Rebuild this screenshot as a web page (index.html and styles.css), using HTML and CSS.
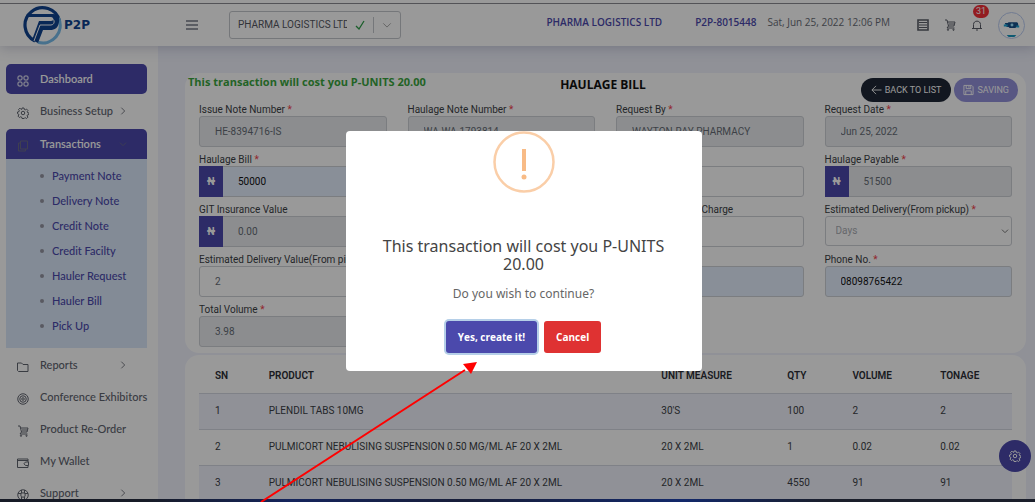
FILE: index.html
```html
<!DOCTYPE html>
<html lang="en">
<head>
<meta charset="utf-8">
<title>Haulage Bill - P2P</title>
<link rel="stylesheet" href="styles.css">
</head>
<body>
<svg class="sprite" aria-hidden="true">
  <symbol id="i-cart" viewBox="0 0 24 24"><path d="M2 2h4l3 12h11l2-8H7M9 14l-3 4h15M10 10h10" /><circle cx="8" cy="21.500" r="1.300"/><circle cx="19" cy="21.500" r="1.300"/></symbol>
  <symbol id="i-gear" viewBox="0 0 24 24"><path d="M10 2h4l.7 3 1.8.8 2.7-1.6 2.7 2.7-1.6 2.7.8 1.7 2.9.7v3l-3 .8-.7 1.8 1.6 2.7-2.7 2.7-2.7-1.6-1.8.8L14 23h-4l-.7-2.8-1.8-.8-2.7 1.6-2.7-2.7 1.6-2.7L3 14l-2-.7V10l3-.7.7-1.7L3.100 5l2.700-2.700L8.500 5l1-.3z"/><circle cx="12" cy="12" r="3.500"/></symbol>
  <symbol id="i-right" viewBox="0 0 24 24"><path d="M7 2l10 10L7 22"/></symbol>
  <symbol id="i-down" viewBox="0 0 24 24"><path d="M3 8l9 9 9-9"/></symbol>
</svg>

<div class="app">
  <header class="topbar">
    <a class="brand" href="#" aria-label="P2P home">
      <svg class="brand-mark" viewBox="0 0 40 40" aria-hidden="true">
        <path d="M13 36A17.500 17.500 0 1 1 37.500 16" fill="none" stroke="#0f4390" stroke-width="3.200"/>
        <path d="M36.500 13A17.500 17.500 0 0 1 16 37.300" fill="none" stroke="#78bdec" stroke-width="3.200"/>
        <path d="M5 9h26c5 0 7 3 6 8-1 6-4 8-9 8h-7l-5 13-6-3 7-19h12c3 0 3-4 0-4H4z" fill="#0f4390"/>
        <path d="M6 14h24c3 0 3 6-1 6H18l-6 16" fill="none" stroke="#fff" stroke-width="1"/>
      </svg>
      <span class="brand-name">P2P</span>
    </a>
    <button class="menu-btn" type="button" aria-label="Toggle menu"><svg viewBox="0 0 12 10"><path d="M0 1h12M0 5h12M0 9h12"/></svg></button>
    <div class="company">
      <select aria-label="Company"><option>PHARMA LOGISTICS LTD</option></select>
      <svg class="check" viewBox="0 0 10 10"><path d="M1 6l3 3 5-8"/></svg>
      <span class="divider"></span>
      <svg class="icon"><use href="#i-down"/></svg>
    </div>
    <div class="account">
      <strong class="acc-name">PHARMA LOGISTICS LTD</strong>
      <strong class="acc-id">P2P-8015448</strong>
      <span class="acc-date">Sat, Jun 25, 2022 12:06 PM</span>
    </div>
    <div class="tools">
      <button type="button" aria-label="Orders"><svg class="icon" viewBox="0 0 12 12"><path d="M1 1h10v10H1z" stroke-width="1.600"/><path d="M2 3.500h8M2 6h8M2 8.500h8"/></svg></button>
      <button type="button" aria-label="Cart"><svg class="icon"><use href="#i-cart"/></svg></button>
      <button class="bell" type="button" aria-label="Notifications, 31 new"><svg class="icon" viewBox="0 0 24 24"><path d="M2 19h20M5 19v-8c0-9 14-9 14 0v8M10 22h4"/></svg><span class="badge">31</span></button>
      <button class="avatar" type="button" aria-label="Profile"><svg viewBox="0 0 26 26"><path d="M6 10.500h3l1-1h8c2 0 2 2 2 3v2h-2l-1 1h-6l-1-1H8z" fill="#17508a"/><circle cx="13.500" cy="12.500" r="1.500" fill="#9de3ff"/><path d="M5 13h4M18 14h3" stroke="#1ca7d8" stroke-width="2"/><path d="M8 23h10l-2 2h-6z" fill="#1896bf"/></svg></button>
    </div>
  </header>

  <div class="body">
    <nav class="sidebar" aria-label="Main">
      <a class="nav-item active" href="#"><svg class="icon" viewBox="0 0 24 24"><rect x="2" y="2" width="8" height="8" rx="2"/><rect x="14" y="2" width="8" height="8" rx="2"/><rect x="2" y="14" width="8" height="8" rx="2"/><rect x="14" y="14" width="8" height="8" rx="2"/></svg><span>Dashboard</span></a>
      <a class="nav-item" href="#"><svg class="icon"><use href="#i-gear"/></svg><span>Business Setup</span><svg class="caret"><use href="#i-right"/></svg></a>
      <div class="nav-group">
        <a class="nav-item open" href="#"><svg class="icon dim" viewBox="0 0 24 24"><path d="M7 2h14v16H7zM7 6H3v16h14v-4"/></svg><span>Transactions</span><svg class="caret dim"><use href="#i-down"/></svg></a>
        <ul class="subnav">
          <li><a href="#">Payment Note</a></li>
          <li><a href="#">Delivery Note</a></li>
          <li><a href="#">Credit Note</a></li>
          <li><a href="#">Credit Facilty</a></li>
          <li><a href="#">Hauler Request</a></li>
          <li><a href="#">Hauler Bill</a></li>
          <li><a href="#">Pick Up</a></li>
        </ul>
      </div>
      <a class="nav-item" href="#"><svg class="icon" viewBox="0 0 24 24"><path d="M1 4h8l3 3h10v14H3l-2-2z"/></svg><span>Reports</span><svg class="caret"><use href="#i-right"/></svg></a>
      <a class="nav-item" href="#"><svg class="icon" viewBox="0 0 24 24"><circle cx="12" cy="12" r="10.500"/><circle cx="12" cy="12" r="6.500"/><circle cx="12" cy="12" r="2.500"/></svg><span>Conference Exhibitors</span></a>
      <a class="nav-item" href="#"><svg class="icon"><use href="#i-cart"/></svg><span>Product Re-Order</span></a>
      <a class="nav-item" href="#"><svg class="icon" viewBox="0 0 24 24"><path d="M22 10V4H1v17h21v-4M1 7h21M23 10h-6l-3 3.500 3 3.500h6z"/></svg><span>My Wallet</span></a>
      <a class="nav-item" href="#"><svg class="icon" viewBox="0 0 24 24"><circle cx="12" cy="12" r="10.500"/><circle cx="12" cy="12" r="4.500"/><path d="M9 2v6M15 2v6M9 16v6M15 16v6M2 9h6M16 9h6"/></svg><span>Support</span><svg class="caret"><use href="#i-right"/></svg></a>
    </nav>

    <main class="content">
      <section class="card">
        <div class="card-head">
          <p class="notice">This transaction will cost you P-UNITS 20.00</p>
          <h1>HAULAGE BILL</h1>
          <div class="actions">
            <button class="pill dark" type="button"><svg class="icon" viewBox="0 0 24 24"><path d="M23 12H2M11 3l-9 9 9 9"/></svg>BACK TO LIST</button>
            <button class="pill violet" type="button"><svg class="icon" viewBox="0 0 24 24"><path d="M2 2h17l3 3v17H2zM7 2v7h10V2M6 22v-8h12v8M13 3v4"/></svg>SAVING</button>
          </div>
        </div>
        <form class="fields">
          <div class="field c1"><label for="f1">Issue Note Number <i>*</i></label><input id="f1" value="HE-8394716-IS" readonly></div>
          <div class="field c2"><label for="f2">Haulage Note Number <i>*</i></label><input id="f2" value="WA-WA-1793814" readonly></div>
          <div class="field c3"><label for="f3">Request By <i>*</i></label><input id="f3" value="WAYTON-RAY PHARMACY" readonly></div>
          <div class="field c4"><label for="f4">Request Date <i>*</i></label><input id="f4" value="Jun 25, 2022" readonly></div>

          <div class="field c1"><label for="f5">Haulage Bill <i>*</i></label><div class="money"><span>₦</span><input id="f5" class="filled" value="50000"></div></div>
          <div class="field c3"><label for="f6"></label><input id="f6" aria-label="Charge rate"></div>
          <div class="field c4"><label for="f7">Haulage Payable <i>*</i></label><div class="money"><span>₦</span><input id="f7" value="51500" readonly></div></div>

          <div class="field c1"><label for="f8">GIT Insurance Value</label><div class="money"><span>₦</span><input id="f8" value="0.00" readonly></div></div>
          <div class="field c3"><label for="f9">Haulage Insurance Charge</label><input id="f9"></div>
          <div class="field c4"><label for="f10">Estimated Delivery(From pickup) <i>*</i></label><div class="pick"><select id="f10"><option>Days</option></select><svg class="icon"><use href="#i-down"/></svg></div></div>

          <div class="field c1"><label for="f11">Estimated Delivery Value(From pickup) <i>*</i></label><input id="f11" value="2"></div>
          <div class="field c3"><label for="f12"></label><input id="f12" class="filled" aria-label="Contact"></div>
          <div class="field c4"><label for="f13">Phone No. <i>*</i></label><input id="f13" class="filled" value="08098765422"></div>

          <div class="field c1"><label for="f14">Total Volume <i>*</i></label><input id="f14" value="3.98" readonly></div>
        </form>
      </section>

      <section class="card table-card">
        <table>
          <colgroup><col class="w-sn"><col class="w-product"><col class="w-unit"><col class="w-qty"><col class="w-num"><col class="w-num"></colgroup>
          <thead><tr><th>SN</th><th>PRODUCT</th><th>UNIT MEASURE</th><th>QTY</th><th>VOLUME</th><th>TONAGE</th></tr></thead>
          <tbody>
            <tr><td>1</td><td>PLENDIL TABS 10MG</td><td>30'S</td><td>100</td><td>2</td><td>2</td></tr>
            <tr><td>2</td><td>PULMICORT NEBULISING SUSPENSION 0.50 MG/ML AF 20 X 2ML</td><td>20 X 2ML</td><td>1</td><td>0.02</td><td>0.02</td></tr>
            <tr><td>3</td><td>PULMICORT NEBULISING SUSPENSION 0.50 MG/ML AF 20 X 2ML</td><td>20 X 2ML</td><td>4550</td><td>91</td><td>91</td></tr>
          </tbody>
        </table>
      </section>
    </main>
  </div>
  <button class="fab" type="button" aria-label="Settings"><svg class="icon"><use href="#i-gear"/></svg></button>
</div>

<div class="overlay">
  <div class="modal" role="dialog" aria-modal="true" aria-labelledby="modal-title">
    <svg class="warn" viewBox="0 0 62 62" aria-hidden="true"><circle cx="31" cy="31" r="29.500" fill="none" stroke="#facea8" stroke-width="2.500"/><path d="M29 18h4v22h-4z" fill="#f8bb86"/><circle cx="31" cy="46" r="2.500" fill="#f8bb86"/></svg>
    <h2 id="modal-title">This transaction will cost you P-UNITS 20.00</h2>
    <p>Do you wish to continue?</p>
    <div class="modal-actions">
      <button class="confirm" type="button">Yes, create it!</button>
      <button class="cancel" type="button">Cancel</button>
    </div>
  </div>
</div>
<div class="taskbar"></div>
<svg class="pointer" viewBox="0 0 220 142" aria-hidden="true"><path d="M2 142L206 10" stroke="#f00" stroke-width="2"/><path d="M218 2L212 14 204 4z" fill="#f00"/></svg>
</body>
</html>
```
FILE: styles.css
```css
* { box-sizing: border-box; }
body {
  margin: 0;
  height: 100vh;
  overflow: hidden;
  font: 10px/14px Roboto, "Noto Sans", sans-serif;
  color: #3c3f46;
  background: #f0f2fc;
}
button, input, select { font: inherit; color: inherit; margin: 0; }
button { border: 0; padding: 0; background: none; }
a { color: inherit; text-decoration: none; }
h1, h2, p, ul { margin: 0; padding: 0; }
svg { fill: none; stroke: currentColor; }
.sprite { position: absolute; width: 0; height: 0; }
.icon { width: 12px; height: 12px; flex: none; stroke-width: 2; }
.icon[viewBox="0 0 12 12"] { stroke-width: 1; }

.app { height: 100vh; display: flex; flex-direction: column; overflow: hidden; border-top: 3px solid #fff; }
.topbar {
  flex: none;
  display: flex;
  align-items: center;
  height: 43px;
  padding-right: 10px;
  background: #fff;
  border-top: 1px solid #8a8a92;
  box-shadow: 0 2px 12px rgba(60, 65, 110, .25);
  z-index: 1;
}
.brand { display: flex; align-items: center; width: 186px; padding-left: 22px; gap: 2px; }
.brand-mark { width: 40px; height: 40px; stroke: none; }
.brand-name { font: 900 12px/14px "DejaVu Sans", sans-serif; color: #0f4390; }
.menu-btn { width: 12px; height: 10px; margin-right: 31px; color: #777c88; }
.menu-btn svg { display: block; stroke-width: 1.5; }
.company {
  display: flex; align-items: center; gap: 8px;
  width: 172px; height: 28px; padding: 0 8px;
  border: 1px solid #c4c6cc; border-radius: 3px; color: #55585f;
}
.company select { flex: 1; min-width: 0; padding: 0; border: 0; background: none; appearance: none; }
.company .icon { width: 10px; height: 10px; color: #999; }
.check { width: 10px; height: 10px; color: #2e9e48; stroke-width: 1.3; }
.divider { width: 1px; height: 16px; background: #c4c6cc; }
.account {
  display: flex; align-items: center; margin-left: auto; padding-bottom: 6px;
  font-family: "Open Sans", "Noto Sans", sans-serif; white-space: nowrap; color: #686c75;
}
.account strong { font-weight: 600; color: #4b49ac; }
.acc-name { margin-right: 33px; }
.acc-id { margin-right: 11px; }
.tools { display: flex; align-items: center; gap: 15px; margin-left: 27px; color: #5a5e68; }
.tools button { display: flex; }
.bell { position: relative; }
.badge {
  position: absolute; left: 2px; top: -14px;
  width: 16px; height: 13px; border-radius: 7px;
  background: #f52f38; color: #fff; font-size: 9px; line-height: 13px; text-align: center;
}
.avatar { width: 27px; height: 27px; border: 1px solid #bccdf2; border-radius: 50%; }
.avatar svg { width: 25px; height: 25px; stroke: none; }

.body { flex: 1; min-height: 0; display: flex; }
.sidebar {
  flex: none; width: 158px; padding: 18px 11px 0 6px;
  display: flex; flex-direction: column; gap: 2px;
  background: #fff; color: #60646f;
  font-family: Lato, "Noto Sans", sans-serif; font-size: 11px; font-weight: 500;
}
.nav-item { flex: none; display: flex; align-items: center; height: 30px; padding: 0 20px 0 11px; border-radius: 5px; }
.nav-item span { margin-left: 11px; white-space: nowrap; }
.nav-item .icon { width: 12px; margin-top: 3px; }
.caret { width: 8px; height: 8px; margin-left: auto; stroke-width: 2.500; }
.active, .open { background: #4b49ac; color: #fff; font-weight: 600; }
.open { border-radius: 5px 5px 0 0; }
.nav-item .dim { color: #6a6a86; }
.nav-group { flex: none; padding-top: 1px; }
.subnav { list-style: none; padding: 4px 0 10px; background: #dbe8fb; color: #4b49ac; }
.subnav li { display: flex; align-items: center; height: 25px; padding-left: 34px; gap: 8px; }
.subnav li::before { content: ""; width: 4px; height: 4px; border-radius: 50%; background: #9495a2; }

.content { flex: 1; min-width: 0; padding: 27px 9px 0 27px; display: flex; flex-direction: column; gap: 2px; }
.card { flex: none; border-radius: 14px; background: #fff; }
.card-head {
  display: grid; grid-template-columns: 1fr auto 1fr; height: 29px; padding: 0 8px 0 3px; align-items: start;
  font-family: "Open Sans", "Noto Sans", sans-serif;
}
.notice { font-size: 11px; line-height: 18px; font-weight: 700; color: #3aa63e; white-space: nowrap; }
h1 { font-size: 12px; line-height: 24px; font-weight: 700; color: #111; }
.actions { display: flex; justify-content: flex-end; gap: 3px; padding-top: 5px; }
.pill { display: flex; align-items: center; gap: 3px; height: 24px; padding: 0 10px; border-radius: 12px; color: #fff; font-family: Roboto, sans-serif; font-size: 9px; white-space: nowrap; }
.pill .icon { width: 11px; }
.dark { background: #1e2736; }
.violet { background: #9391da; padding: 0 9px; }

.fields { display: grid; grid-template-columns: repeat(4, minmax(0, 1fr)); gap: 5px 21px; padding: 0 14px 6px; }
.c1 { grid-column: 1; } .c2 { grid-column: 2; } .c3 { grid-column: 3; } .c4 { grid-column: 4; }
.field label { display: block; height: 14px; line-height: 16px; white-space: nowrap; }
.field i { font-style: normal; color: #f3414b; }
.field input, .pick {
  display: block; width: 100%; height: 31px; padding: 0 15px;
  border: 1px solid #cdd0d6; border-radius: 3px; background: #fff; color: #676c76;
}
.field input:read-only { background: #e9ecef; }
.field .filled { background: #e5eefd; color: #111; }
.money { display: flex; }
.money span { flex: none; width: 24px; line-height: 31px; background: #4b49ac; color: #fff; text-align: center; font-weight: 700; }
.money input { border-left: 0; border-radius: 0 3px 3px 0; }
.pick { display: flex; align-items: center; height: 30px; padding: 0 2px 0 10px; }
.pick select { flex: 1; border: 0; padding: 0; background: none; appearance: none; color: #aaadb3; }
.pick .icon { width: 8px; color: #777; stroke-width: 3; }

.table-card { padding: 4px 14px 10px; }
table { width: 100%; table-layout: fixed; border-collapse: collapse; }
.w-sn { width: 6.600%; } .w-product { width: 48.300%; } .w-unit { width: 15.500%; } .w-qty { width: 8%; } .w-num { width: 10.800%; }
th, td { height: 36px; padding: 0 0 0 16px; text-align: left; white-space: nowrap; border-bottom: 1px solid #d4d7e2; }
th { height: 34px; font-weight: 600; color: #2c2e36; }
tbody tr:nth-child(odd) { background: #f0f2fc; }

.fab {
  position: fixed; right: 4px; bottom: 30px;
  display: flex; align-items: center; justify-content: center;
  width: 32px; height: 32px; border-radius: 50%; background: #4b49ac; color: #fff;
}

.overlay { position: fixed; inset: 0; z-index: 5; display: flex; align-items: center; justify-content: center; background: rgba(0, 0, 0, .4); padding-left: 12px; }
.modal {
  display: flex; flex-direction: column; align-items: center;
  width: 356px; padding: 0 24px 18px; border-radius: 4px; background: #fff; text-align: center;
  font-family: "Noto Sans", "Open Sans", sans-serif;
}
.warn { width: 62px; height: 62px; stroke: none; }
.modal h2 { margin-top: 44px; font-size: 16px; line-height: 18px; font-weight: 400; color: #444; }
.modal p { margin-top: 12px; font-size: 12px; line-height: 18px; color: #666; }
.modal-actions { display: flex; gap: 7px; margin-top: 18px; }
.modal-actions button { height: 32px; padding: 0 12px; border-radius: 3px; color: #fff; font-family: "Open Sans", sans-serif; font-weight: 700; }
.confirm { background: #4b49ac; box-shadow: 0 0 0 2px #b5cfe8; }
.cancel { background: #df3232; }

.taskbar { position: fixed; inset: auto 0 0; z-index: 6; height: 3px; background: linear-gradient(90deg, #171b26 0 14%, #14245c 28%, #171d38 45%, #12286a 66%, #1a1e2a 80%); }
.pointer { position: fixed; z-index: 7; left: 259px; bottom: 0; width: 220px; height: 142px; stroke: none; }
```
